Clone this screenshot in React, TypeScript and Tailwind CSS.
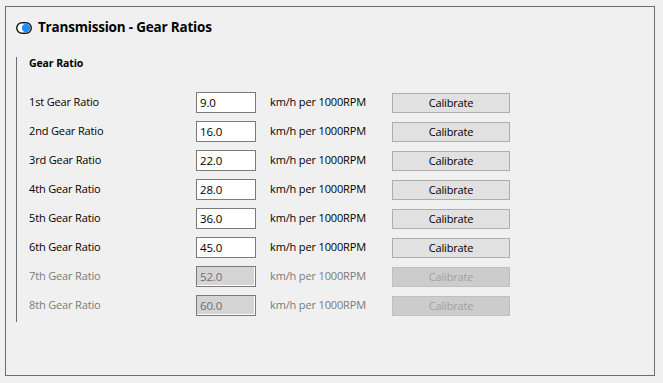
import React from 'react';

const GEARS = [
  { label: '1st Gear Ratio', value: '9.0', enabled: true },
  { label: '2nd Gear Ratio', value: '16.0', enabled: true },
  { label: '3rd Gear Ratio', value: '22.0', enabled: true },
  { label: '4th Gear Ratio', value: '28.0', enabled: true },
  { label: '5th Gear Ratio', value: '36.0', enabled: true },
  { label: '6th Gear Ratio', value: '45.0', enabled: true },
  { label: '7th Gear Ratio', value: '52.0', enabled: false },
  { label: '8th Gear Ratio', value: '60.0', enabled: false },
];

function ToggleIcon() {
  return (
    <svg width="16" height="12" viewBox="0 0 16 12" className="shrink-0">
      <rect x="0.75" y="0.75" width="14.5" height="10.5" rx="5.25" fill="#fff" stroke="#1a1a1a" strokeWidth="1.5" />
      <circle cx="10" cy="6" r="4.2" fill="#1e8fff" />
    </svg>
  );
}

export default function App() {
  return (
    <div
      className="w-[663px] h-[383px] bg-[#f0f0f0] pt-[6px] pl-[5px] text-black"
      style={{ fontFamily: '"Open Sans", "Noto Sans", sans-serif' }}
    >
      <div className="w-[650px] h-[370px] border border-[#6d6d6d]">
        {/* Title */}
        <div className="mt-[11px] h-[20px] pl-[10px] flex items-center gap-[6px]">
          <ToggleIcon />
          <span className="text-[13.5px] font-bold leading-none tracking-[-0.2px]">Transmission - Gear Ratios</span>
        </div>

        {/* Group */}
        <div className="mt-[19px] ml-[10px] h-[265px] border-l border-[#6d6d6d]">
          <div className="h-[14px] pl-[12px] flex items-center text-[10.5px] font-bold tracking-[-0.1px]">Gear Ratio</div>
          <div className="mt-[17px] pl-[12px]">
            {GEARS.map(g => (
              <div key={g.label} className="h-[29px] flex items-center text-[11px] tracking-[-0.15px]">
                <span className={`w-[167px] ${g.enabled ? 'text-black' : 'text-[#7a7a7a]'}`}>{g.label}</span>
                <input
                  readOnly
                  disabled={!g.enabled}
                  defaultValue={g.value}
                  className={
                    g.enabled
                      ? 'w-[60px] h-[21px] border border-[#7a7a7a] bg-white px-[3px] text-[11.5px] text-black outline-none'
                      : 'w-[60px] h-[21px] border border-[#7a7a7a] bg-[#d4d4d4] px-[3px] text-[11.5px] text-[#6d6d6d] shadow-[inset_-1px_-1px_0_#fff] outline-none'
                  }
                />
                <span className={`ml-[14px] w-[122px] ${g.enabled ? 'text-black' : 'text-[#7a7a7a]'}`}>km/h per 1000RPM</span>
                <button
                  disabled={!g.enabled}
                  className={
                    g.enabled
                      ? 'w-[118px] h-[20px] bg-[#e1e1e1] border border-[#adadad] text-[11px] text-black leading-none'
                      : 'w-[118px] h-[20px] bg-[#cccccc] border border-[#bfbfbf] text-[11px] text-[#a0a0a0] leading-none'
                  }
                >
                  Calibrate
                </button>
              </div>
            ))}
          </div>
        </div>
      </div>
    </div>
  );
}
